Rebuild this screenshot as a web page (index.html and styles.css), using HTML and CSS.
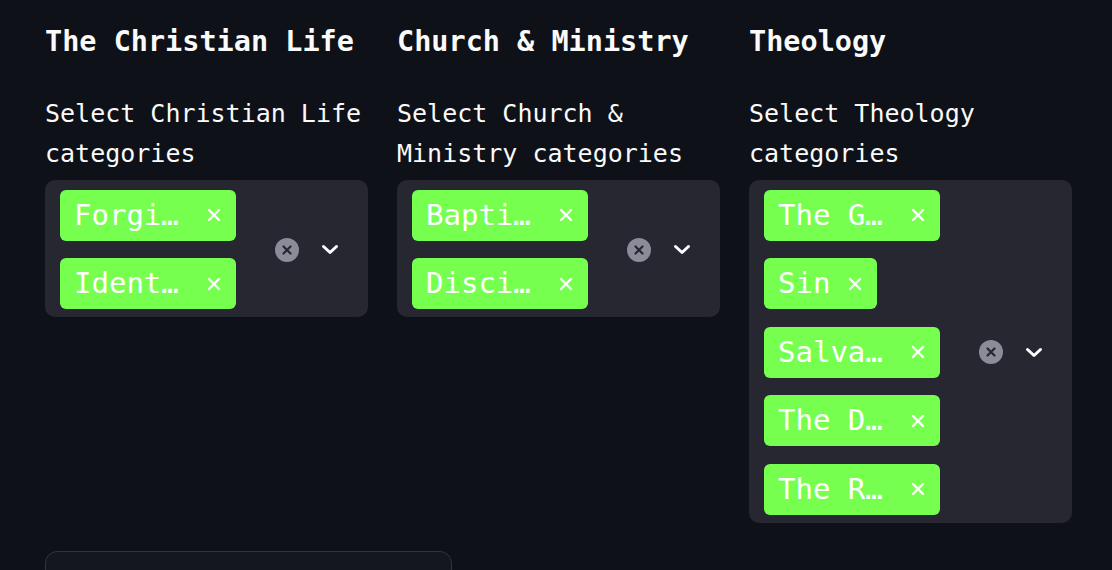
FILE: index.html
```html
<!DOCTYPE html>
<html lang="en">
<head>
<meta charset="utf-8">
<title>Categories</title>
<link rel="stylesheet" href="styles.css">
</head>
<body>
<main class="page">
  <div class="columns">
    <section class="col">
      <h3 class="heading">The Christian Life</h3>
      <label class="label">Select Christian Life categories</label>
      <div class="select">
        <div class="values">
          <span class="tag"><span class="tag-text tag-long" title="Forgiveness">Forgi…</span><svg class="tag-x" viewBox="0 0 14 14"><path d="M2 2L12 12M12 2L2 12"/></svg></span>
          <span class="tag"><span class="tag-text tag-long" title="Identity">Ident…</span><svg class="tag-x" viewBox="0 0 14 14"><path d="M2 2L12 12M12 2L2 12"/></svg></span>
        </div>
        <div class="indicators">
          <span class="ind"><svg class="clear" viewBox="0 0 24 24"><circle cx="12" cy="12" r="12"/><path d="M8.5 8.5L15.5 15.5M15.5 8.5L8.5 15.5"/></svg></span>
          <span class="ind ind-chev"><svg class="chev" viewBox="0 0 18 11"><path d="M2.5 2.5L9 8.5L15.5 2.5"/></svg></span>
        </div>
      </div>
    </section>
    <section class="col">
      <h3 class="heading">Church &amp; Ministry</h3>
      <label class="label">Select Church &amp; Ministry categories</label>
      <div class="select">
        <div class="values">
          <span class="tag"><span class="tag-text tag-long" title="Baptism">Bapti…</span><svg class="tag-x" viewBox="0 0 14 14"><path d="M2 2L12 12M12 2L2 12"/></svg></span>
          <span class="tag"><span class="tag-text tag-long" title="Discipleship">Disci…</span><svg class="tag-x" viewBox="0 0 14 14"><path d="M2 2L12 12M12 2L2 12"/></svg></span>
        </div>
        <div class="indicators">
          <span class="ind"><svg class="clear" viewBox="0 0 24 24"><circle cx="12" cy="12" r="12"/><path d="M8.5 8.5L15.5 15.5M15.5 8.5L8.5 15.5"/></svg></span>
          <span class="ind ind-chev"><svg class="chev" viewBox="0 0 18 11"><path d="M2.5 2.5L9 8.5L15.5 2.5"/></svg></span>
        </div>
      </div>
    </section>
    <section class="col">
      <h3 class="heading">Theology</h3>
      <label class="label">Select Theology categories</label>
      <div class="select">
        <div class="values">
          <span class="tag"><span class="tag-text tag-long" title="The Gospel">The G…</span><svg class="tag-x" viewBox="0 0 14 14"><path d="M2 2L12 12M12 2L2 12"/></svg></span>
          <span class="tag"><span class="tag-text">Sin</span><svg class="tag-x" viewBox="0 0 14 14"><path d="M2 2L12 12M12 2L2 12"/></svg></span>
          <span class="tag"><span class="tag-text tag-long" title="Salvation">Salva…</span><svg class="tag-x" viewBox="0 0 14 14"><path d="M2 2L12 12M12 2L2 12"/></svg></span>
          <span class="tag"><span class="tag-text tag-long" title="The Doctrine of God">The D…</span><svg class="tag-x" viewBox="0 0 14 14"><path d="M2 2L12 12M12 2L2 12"/></svg></span>
          <span class="tag"><span class="tag-text tag-long" title="The Resurrection">The R…</span><svg class="tag-x" viewBox="0 0 14 14"><path d="M2 2L12 12M12 2L2 12"/></svg></span>
        </div>
        <div class="indicators">
          <span class="ind"><svg class="clear" viewBox="0 0 24 24"><circle cx="12" cy="12" r="12"/><path d="M8.5 8.5L15.5 15.5M15.5 8.5L8.5 15.5"/></svg></span>
          <span class="ind ind-chev"><svg class="chev" viewBox="0 0 18 11"><path d="M2.5 2.5L9 8.5L15.5 2.5"/></svg></span>
        </div>
      </div>
    </section>
  </div>
  <div class="panel"></div>
</main>
</body>
</html>
```
FILE: styles.css
```css
html, body {
  margin: 0;
  padding: 0;
  background: #0e1117;
  overflow: hidden;
}

.page {
  padding: 25px 0 0 45px;
  font-family: "DejaVu Sans Mono", "Liberation Mono", monospace;
  color: #fafafa;
}

.columns {
  display: grid;
  grid-template-columns: 323px 323px 323px;
  column-gap: 29px;
  align-items: start;
}

.col {
  display: flex;
  flex-direction: column;
}

.heading {
  margin: 0;
  font-size: 28.5px;
  line-height: 34.8px;
  font-weight: bold;
  white-space: nowrap;
}

.label {
  display: block;
  margin-top: 34px;
  font-size: 25px;
  line-height: 40px;
}

.select {
  margin-top: 6px;
  background: #262730;
  border-radius: 10px;
  display: flex;
  align-items: center;
  padding: 10px 16px 8px 15px;
}

.values {
  flex: 1;
  display: flex;
  flex-direction: column;
  align-items: flex-start;
  row-gap: 17.5px;
}

.tag {
  display: flex;
  align-items: center;
  height: 51px;
  padding: 0 15px 0 14px;
  background: #77ff50;
  border-radius: 6px;
  font-size: 29px;
  color: #ffffff;
}

.tag-text {
  white-space: nowrap;
  line-height: 51px;
}

.tag-long {
  width: 115px;
}

.tag-x {
  width: 14px;
  height: 14px;
  margin-left: 18px;
  flex: none;
}

.tag-x path {
  stroke: #ffffff;
  stroke-width: 2.4;
  stroke-linecap: round;
  fill: none;
}

.indicators {
  display: flex;
  align-items: center;
}

.ind {
  width: 43px;
  display: flex;
  justify-content: center;
  align-items: center;
}

.ind-chev {
  width: 44px;
}

.clear {
  width: 24px;
  height: 24px;
}

.clear circle {
  fill: #8b8c9a;
}

.clear path {
  stroke: #262730;
  stroke-width: 2.2;
  stroke-linecap: round;
  fill: none;
}

.chev {
  width: 18px;
  height: 11px;
}

.chev path {
  stroke: #ffffff;
  stroke-width: 3;
  stroke-linecap: round;
  stroke-linejoin: round;
  fill: none;
}

.panel {
  margin-top: 28px;
  width: 405px;
  height: 80px;
  border: 1px solid #31343e;
  border-radius: 12px;
  background: #141720;
}
```
